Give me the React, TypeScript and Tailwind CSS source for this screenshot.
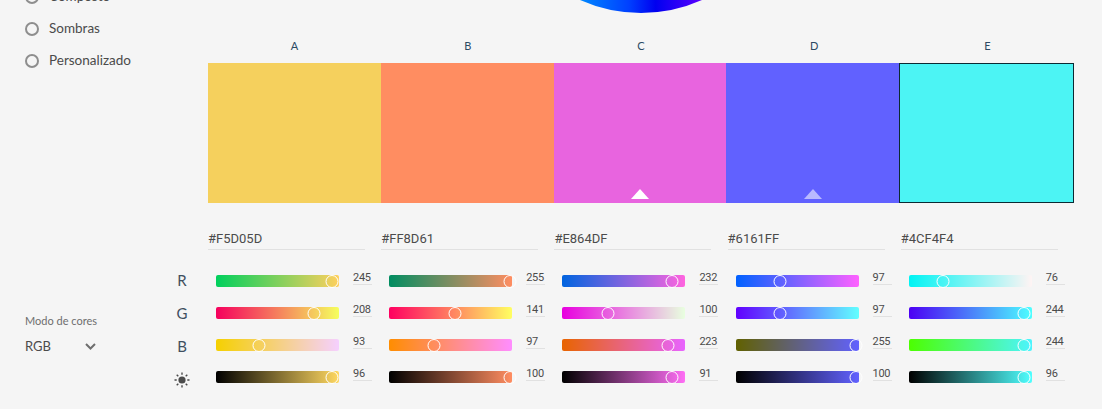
const FONT = "font-['Lato','Open_Sans',sans-serif]";
const DIGITS = "font-['Roboto','Open_Sans',sans-serif]";

type Channel = { value: number; pos: number; from: string; to: string };

type Swatch = {
  letter: string;
  color: string;
  hex: string;
  channels: Channel[];
};

const swatches: Swatch[] = [
  {
    letter: 'A',
    color: '#F5D05D',
    hex: '#F5D05D',
    channels: [
      { value: 245, pos: 116, from: '#00d05d', to: '#ffd05d' },
      { value: 208, pos: 98, from: '#f5005d', to: '#f5ff5d' },
      { value: 93, pos: 43, from: '#f5d000', to: '#f5d0ff' },
      { value: 96, pos: 116, from: '#000000', to: '#ffd861' },
    ],
  },
  {
    letter: 'B',
    color: '#FF8D61',
    hex: '#FF8D61',
    channels: [
      { value: 255, pos: 121, from: '#008d61', to: '#ff8d61' },
      { value: 141, pos: 66, from: '#ff0061', to: '#ffff61' },
      { value: 97, pos: 45, from: '#ff8d00', to: '#ff8dff' },
      { value: 100, pos: 121, from: '#000000', to: '#ff8d61' },
    ],
  },
  {
    letter: 'C',
    color: '#E864DF',
    hex: '#E864DF',
    channels: [
      { value: 232, pos: 110, from: '#0064df', to: '#ff64df' },
      { value: 100, pos: 46, from: '#e800df', to: '#e8ffdf' },
      { value: 223, pos: 106, from: '#e86400', to: '#e864ff' },
      { value: 91, pos: 110, from: '#000000', to: '#ff6ef5' },
    ],
  },
  {
    letter: 'D',
    color: '#6161FF',
    hex: '#6161FF',
    channels: [
      { value: 97, pos: 44, from: '#0061ff', to: '#ff61ff' },
      { value: 97, pos: 44, from: '#6100ff', to: '#61ffff' },
      { value: 255, pos: 120, from: '#616100', to: '#6161ff' },
      { value: 100, pos: 120, from: '#000000', to: '#6161ff' },
    ],
  },
  {
    letter: 'E',
    color: '#4CF4F4',
    hex: '#4CF4F4',
    channels: [
      { value: 76, pos: 34, from: '#00f4f4', to: '#fff4f4' },
      { value: 244, pos: 115, from: '#4c00f4', to: '#4cffff' },
      { value: 244, pos: 115, from: '#4cff00', to: '#4cf4ff' },
      { value: 96, pos: 115, from: '#000000', to: '#4fffff' },
    ],
  },
];

function Radio({ label }: { label: string }) {
  return (
    <div className="flex h-[32px] items-center gap-[10px]">
      <span className="h-[14px] w-[14px] rounded-full border-2 border-[#8e8e8e]" />
      <span className="pb-[1px] text-[13.5px] text-[#4b4b4b]">{label}</span>
    </div>
  );
}

function Wheel() {
  return (
    <svg width="134" height="14" viewBox="0 0 134 14" className="block">
      <defs>
        <linearGradient id="wheel" x1="0" y1="0" x2="1" y2="0">
          <stop offset="0" stopColor="#0088ff" />
          <stop offset="0.4" stopColor="#0040ff" />
          <stop offset="0.62" stopColor="#0000f0" />
          <stop offset="1" stopColor="#5a00ff" />
        </linearGradient>
      </defs>
      <path d="M6 0 A150 150 0 0 0 128 0 Z" fill="url(#wheel)" />
    </svg>
  );
}

function Slider({ channel }: { channel: Channel }) {
  return (
    <div className="flex h-[32px] items-start">
      <div
        className="relative ml-[8px] mt-[3px] h-[12px] w-[123px] rounded-[2px]"
        style={{ background: `linear-gradient(to right, ${channel.from}, ${channel.to})` }}
      >
        <span
          className="absolute top-[-0.5px] h-[13px] w-[13px] -translate-x-1/2 rounded-full border-[1.5px] border-white"
          style={{ left: channel.pos }}
        />
      </div>
      <div
        className={`ml-[14px] h-[13px] w-[19px] border-b border-[#e1e1e1] text-[11px] leading-[12px] tracking-[-0.3px] text-[#4b4b4b] ${DIGITS}`}
      >
        {channel.value}
      </div>
    </div>
  );
}

function SunIcon() {
  return (
    <svg width="16" height="16" viewBox="0 0 16 16" fill="#4b4b4b" className="mt-[3px] block">
      <circle cx="8" cy="8" r="3.6" />
      <path
        d="M8 .5v2.2M8 13.3v2.2M.5 8h2.2M13.3 8h2.2M2.7 2.7l1.6 1.6M11.7 11.7l1.6 1.6M2.7 13.3l1.6-1.6M11.7 4.3l1.6-1.6"
        stroke="#4b4b4b"
        strokeWidth="1.4"
      />
    </svg>
  );
}

export default function App() {
  return (
    <div className={`h-[409px] w-[1102px] overflow-hidden bg-[#f5f5f5] ${FONT}`}>
      <div className="flex">
        <div className="w-[208px] pl-[25px]">
          <div className="-mt-[19px]">
            <Radio label="Composto" />
            <Radio label="Sombras" />
            <Radio label="Personalizado" />
          </div>
        </div>
        <div className="w-[866px]">
          <div className="flex h-[63px] flex-col">
            <div className="ml-[366px]">
              <Wheel />
            </div>
            <div className="mt-[25px] grid grid-cols-5 text-center text-[11px] leading-[14px] text-[#2c4a63]">
              {swatches.map((s) => (
                <div key={s.letter}>{s.letter}</div>
              ))}
            </div>
          </div>
          <div className="grid h-[140px] grid-cols-[173px_173px_172px_173px_175px]">
            {swatches.map((s, i) => (
              <div
                key={s.letter}
                className={`flex items-end justify-center pb-[4px] ${i === 4 ? 'border border-[#0b2a33]' : ''}`}
                style={{ backgroundColor: s.color }}
              >
                {i === 2 && (
                  <span className="h-0 w-0 border-x-[9px] border-b-[10px] border-x-transparent border-b-white" />
                )}
                {i === 3 && (
                  <span className="h-0 w-0 border-x-[9px] border-b-[10px] border-x-transparent border-b-[#b9b9ff]" />
                )}
              </div>
            ))}
          </div>
        </div>
      </div>

      <div className="flex">
        <div className="flex w-[208px]">
          <div className="w-[173px] pl-[25px] pt-[110px]">
            <div className="text-[11px] leading-[16px] text-[#6e6e6e]">Modo de cores</div>
            <div className="mt-[7px] flex w-[71px] items-center justify-between text-[13px] leading-[20px] text-[#4b4b4b]">
              <span>RGB</span>
              <svg width="11" height="7" viewBox="0 0 11 7" fill="none" className="block">
                <path d="M1 1l4.5 4.5L10 1" stroke="#6e6e6e" strokeWidth="2" />
              </svg>
            </div>
          </div>
          <div className="flex w-[18px] flex-col items-center pt-[67px] text-[15px] text-[#3f4f5f]">
            <div className="h-[33px] leading-[20px]">R</div>
            <div className="h-[33px] leading-[20px]">G</div>
            <div className="h-[33px] leading-[20px]">B</div>
            <SunIcon />
          </div>
        </div>
        <div className="grid w-[866px] grid-cols-5">
          {swatches.map((s) => (
            <div key={s.letter}>
              <div
                className={`mt-[24px] h-[23px] w-[157px] border-b border-[#e1e1e1] text-[13px] leading-[24px] text-[#4b4b4b] ${DIGITS}`}
              >
                {s.hex}
              </div>
              <div className="mt-[22px]">
                {s.channels.map((c, i) => (
                  <Slider key={i} channel={c} />
                ))}
              </div>
            </div>
          ))}
        </div>
      </div>
    </div>
  );
}
